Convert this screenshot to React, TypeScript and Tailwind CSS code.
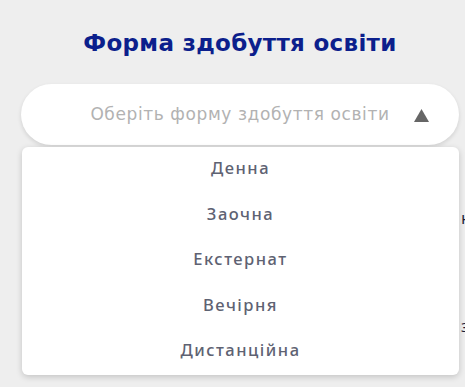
import { useState } from 'react';

const options = ['Денна', 'Заочна', 'Екстернат', 'Вечірня', 'Дистанційна'];

export default function App() {
  const [open, setOpen] = useState(true);
  const [value, setValue] = useState<string | null>(null);

  return (
    <main className="w-[465px] h-[387px] overflow-hidden bg-[#eeeeee] font-['Open_Sans',sans-serif]">
      <div className="ml-[21px] w-[438px]">
        <h1 className="pt-[27px] text-center text-[23px] leading-[33px] font-bold tracking-[0.3px] text-[#0c1f8c] font-['DejaVu_Sans',sans-serif]">
          Форма здобуття освіти
        </h1>

        <div className="relative mt-[24px]">
          {/* Поле вибору */}
          <button
            onClick={() => setOpen(!open)}
            className="relative flex h-[61px] w-full items-center justify-center rounded-full bg-white shadow-[0_2px_4px_rgba(0,0,0,0.12)]"
          >
            <span className="text-[17px] tracking-[0.6px] text-[#b2b2b2] font-['DejaVu_Sans',sans-serif]">
              {value ?? 'Оберіть форму здобуття освіти'}
            </span>
            <svg
              className="absolute right-[30px] top-[25px]"
              width="15"
              height="13"
              viewBox="0 0 15 13"
            >
              {open ? (
                <path d="M7.5 0 L15 13 L0 13 Z" fill="#666666" />
              ) : (
                <path d="M0 0 L15 0 L7.5 13 Z" fill="#666666" />
              )}
            </svg>
          </button>

          {/* Вміст сторінки під списком */}
          <div className="mt-[60px] whitespace-nowrap pl-[440px] text-[17px] text-[#1b1d3a]">
            <p>нн</p>
            <p className="mt-[82px]">ззз</p>
          </div>

          {/* Список варіантів */}
          {open && (
            <ul className="absolute left-[1px] top-[63px] w-[437px] rounded-[6px] bg-white shadow-[0_2px_6px_rgba(0,0,0,0.18)]">
              {options.map((o) => (
                <li
                  key={o}
                  onClick={() => {
                    setValue(o);
                    setOpen(false);
                  }}
                  className="flex h-[45.6px] cursor-pointer items-center justify-center pb-[3px] text-[16.5px] font-medium tracking-[1.5px] text-[#5e6272] font-['Noto_Sans',sans-serif]"
                >
                  {o}
                </li>
              ))}
            </ul>
          )}
        </div>
      </div>
    </main>
  );
}
